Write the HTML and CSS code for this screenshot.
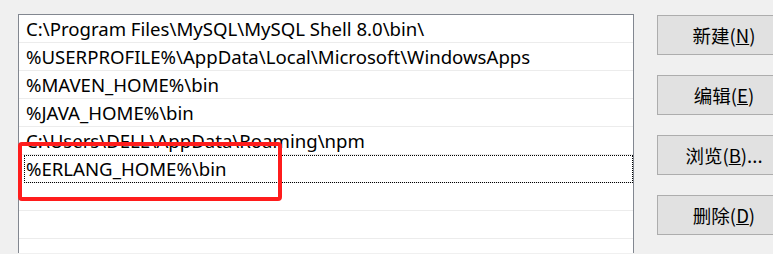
FILE: index.html
```html
<!DOCTYPE html>
<html lang="zh-CN">
<head>
  <meta charset="UTF-8" />
  <title>编辑环境变量</title>
  <link rel="stylesheet" href="styles.css">
</head>
<body>

  <div class="dialog">
    <div class="path-list">
      <div class="row">C:\Program Files\MySQL\MySQL Shell 8.0\bin\</div>
      <div class="row">%USERPROFILE%\AppData\Local\Microsoft\WindowsApps</div>
      <div class="row">%MAVEN_HOME%\bin</div>
      <div class="row">%JAVA_HOME%\bin</div>
      <div class="row">C:\Users\DELL\AppData\Roaming\npm</div>
      <div class="row focused">%ERLANG_HOME%\bin</div>
      <div class="row"></div>
      <div class="row"></div>
      <div class="mark"></div>
    </div>

    <div class="actions">
      <button>新建(<u>N</u>)</button>
      <button>编辑(<u>E</u>)</button>
      <button>浏览(<u>B</u>)...</button>
      <button>删除(<u>D</u>)</button>
    </div>
  </div>

</body>
</html>
```

FILE: styles.css
```css
body {
  margin: 0;
  background: #f0f0f0;
  color: #000;
  font-family: "Noto Sans", "Noto Sans CJK SC", sans-serif;
  overflow: hidden;
  height: 254px;
}

.dialog {
  display: flex;
  align-items: flex-start;
  padding: 14px 0 0 18px;
}

.path-list {
  position: relative;
  width: 614px;
  height: 238px;
  background: #fff;
  border: 1px solid #828790;
  border-bottom: none;
  flex-shrink: 0;
}

.row {
  height: 27px;
  border-bottom: 1px solid #ececec;
  padding-left: 7px;
  font-size: 18.6px;
  line-height: 27px;
  white-space: nowrap;
}

.row.focused {
  margin-left: 5px;
  padding-left: 2px;
  outline: 1px dotted #000;
  outline-offset: -1px;
}

.mark {
  position: absolute;
  left: -1px;
  top: 127px;
  width: 256px;
  height: 51px;
  border: 4px solid #ff1c1c;
  border-radius: 4px;
}

.actions {
  display: flex;
  flex-direction: column;
  gap: 20px;
  margin: 1px 0 0 23px;
  flex-shrink: 0;
}

button {
  width: 134px;
  height: 40px;
  background: #e1e1e1;
  border: 1px solid #adadad;
  font-family: "Noto Sans CJK SC", sans-serif;
  font-size: 18.5px;
  color: #000;
  padding: 0;
}
```
